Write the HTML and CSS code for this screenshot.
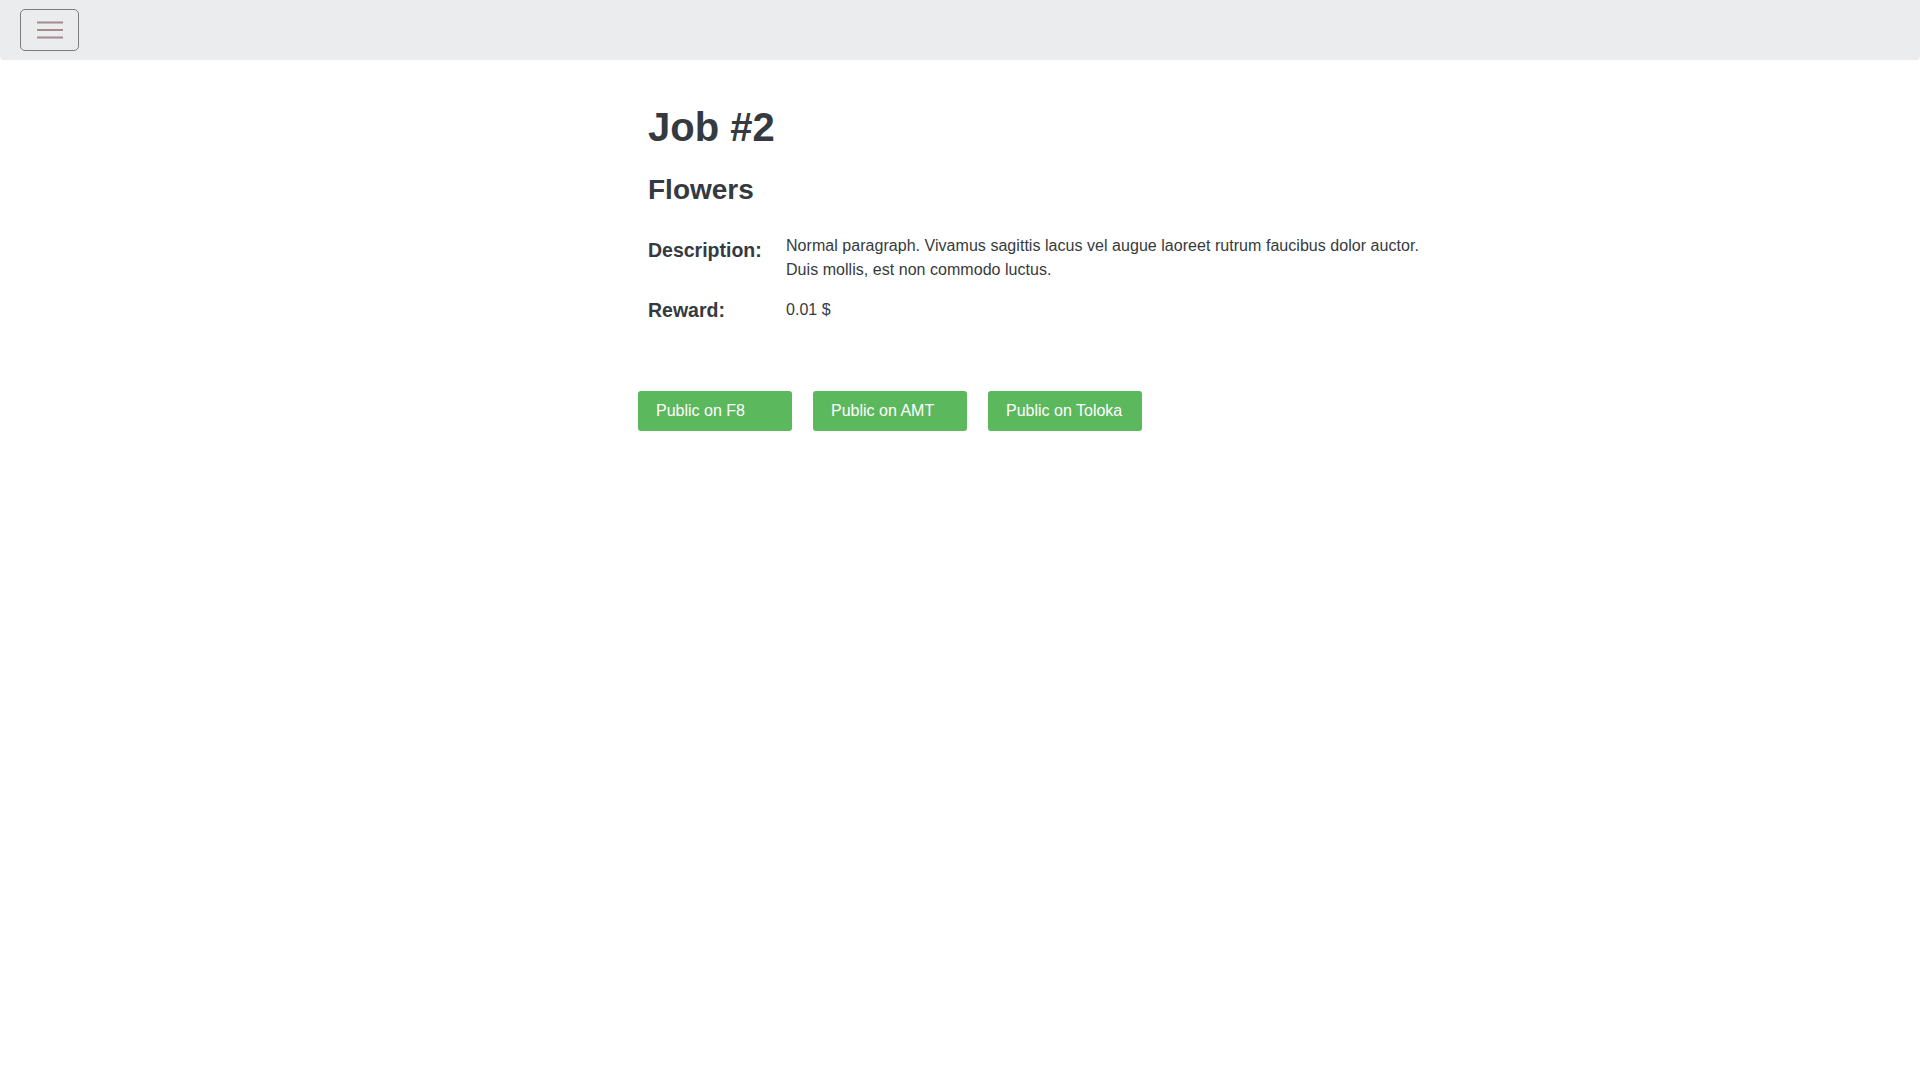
FILE: index.html
```html
<!DOCTYPE html>
<html lang="en">
<head>
<meta charset="utf-8">
<title>Job #2</title>
<link rel="stylesheet" href="styles.css">
</head>
<body>
<nav class="navbar">
  <button class="toggler" type="button" aria-label="Toggle navigation">
    <svg class="toggler-icon" width="26" height="20" viewBox="0 0 26 20">
      <path d="M0 2.5h26M0 10h26M0 17.5h26" stroke="#a68a8e" stroke-width="2" fill="none"/>
    </svg>
  </button>
</nav>
<main class="page">
  <section class="info">
    <h1 class="title">Job #2</h1>
    <h3 class="subtitle">Flowers</h3>
    <div class="row row-desc">
      <div class="label">Description:</div>
      <div class="value">Normal paragraph. Vivamus sagittis lacus vel augue laoreet rutrum faucibus dolor auctor.<br>Duis mollis, est non commodo luctus.</div>
    </div>
    <div class="row row-reward">
      <div class="label">Reward:</div>
      <div class="value">0.01 $</div>
    </div>
  </section>
  <div class="actions">
    <button class="btn" type="button">Public on F8</button>
    <button class="btn" type="button">Public on AMT</button>
    <button class="btn" type="button">Public on Toloka</button>
  </div>
</main>
</body>
</html>
```
FILE: styles.css
```css
html, body {
  margin: 0;
  padding: 0;
  background: #ffffff;
}
body {
  font-family: "Liberation Sans", Arial, Helvetica, sans-serif;
  color: #373a3c;
  font-size: 16px;
  line-height: 24px;
}
.navbar {
  box-sizing: border-box;
  height: 60px;
  padding: 9px 20px;
  background: #ebecee;
  border-radius: 0 0 4px 4px;
  display: flex;
  align-items: flex-start;
}
.toggler {
  box-sizing: border-box;
  width: 59px;
  height: 42px;
  padding: 0;
  border: 1px solid #7d7d7d;
  border-radius: 5px;
  background: transparent;
  display: flex;
  align-items: center;
  justify-content: center;
}
.toggler-icon {
  display: block;
  margin-left: 1px;
}
.page {
  padding-left: 638px;
  padding-top: 43px;
}
.info {
  padding-left: 10px;
}
.title {
  margin: 0;
  font-size: 40px;
  line-height: 48px;
  font-weight: 700;
  color: #343a40;
}
.subtitle {
  margin: 22px 0 0;
  font-size: 28px;
  line-height: 34px;
  font-weight: 700;
  color: #343a40;
}
.row {
  display: flex;
  align-items: flex-start;
}
.row-desc {
  margin-top: 27px;
}
.row-reward {
  margin-top: 16px;
}
.label {
  width: 138px;
  flex: none;
  font-size: 19.5px;
  line-height: 24px;
  font-weight: 700;
  color: #343a40;
}
.row-desc .label {
  padding-top: 4px;
}
.value {
  font-size: 16px;
  line-height: 24px;
  color: #373a3c;
  letter-spacing: 0.04px;
}
.actions {
  display: flex;
  gap: 21px;
  margin-top: 69px;
}
.btn {
  box-sizing: border-box;
  width: 154px;
  height: 40px;
  padding: 0 0 0 18px;
  border: none;
  border-radius: 3px;
  background: #5cb85c;
  color: #ffffff;
  font-family: "Liberation Sans", Arial, Helvetica, sans-serif;
  font-size: 16px;
  text-align: left;
  cursor: pointer;
}
```
